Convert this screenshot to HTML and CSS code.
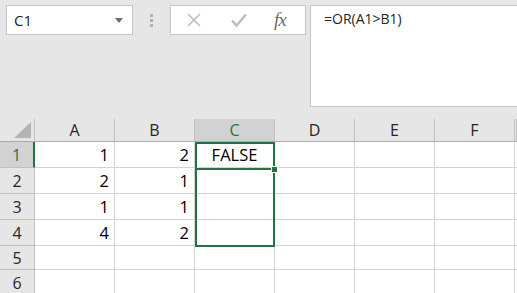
FILE: index.html
```html
<!DOCTYPE html>
<html lang="en">
<head>
    <meta charset="UTF-8">
    <title>OR formula</title>
    <link rel="stylesheet" href="styles.css">
</head>
<body>

<!-- Name box, buttons and formula bar -->
<div class="toolbar">
    <div class="name-box">
        <span>C1</span>
        <svg class="caret" width="8" height="5" viewBox="0 0 8 5"><path d="M0 0h8L4 5z" fill="#6d6d6d"/></svg>
    </div>
    <div class="grip">
        <i></i><i></i><i></i>
    </div>
    <div class="fx-buttons">
        <svg width="16" height="16" viewBox="0 0 16 16"><path d="M2 2l12 12M14 2L2 14" stroke="#bdbdbd" stroke-width="1.6" fill="none"/></svg>
        <svg width="18" height="16" viewBox="0 0 18 16"><path d="M2 8.5l4.5 5L16 2.5" stroke="#bdbdbd" stroke-width="2.6" fill="none"/></svg>
        <span class="fx">fx</span>
    </div>
    <div class="formula">=OR(A1&gt;B1)</div>
</div>

<!-- Sheet -->
<div class="sheet">
    <div class="corner"><svg width="17" height="16" viewBox="0 0 17 16"><path d="M17 0v16H0z" fill="#b4b4b4"/></svg></div>
    <div class="col-head">A</div>
    <div class="col-head">B</div>
    <div class="col-head active">C</div>
    <div class="col-head">D</div>
    <div class="col-head">E</div>
    <div class="col-head">F</div>
    <div class="col-head"></div>

    <div class="row-head active">1</div>
    <div class="cell num">1</div><div class="cell num">2</div><div class="cell center">FALSE</div>
    <div class="cell"></div><div class="cell"></div><div class="cell"></div><div class="cell"></div>

    <div class="row-head">2</div>
    <div class="cell num">2</div><div class="cell num">1</div><div class="cell"></div>
    <div class="cell"></div><div class="cell"></div><div class="cell"></div><div class="cell"></div>

    <div class="row-head">3</div>
    <div class="cell num">1</div><div class="cell num">1</div><div class="cell"></div>
    <div class="cell"></div><div class="cell"></div><div class="cell"></div><div class="cell"></div>

    <div class="row-head">4</div>
    <div class="cell num">4</div><div class="cell num">2</div><div class="cell"></div>
    <div class="cell"></div><div class="cell"></div><div class="cell"></div><div class="cell"></div>

    <div class="row-head">5</div>
    <div class="cell"></div><div class="cell"></div><div class="cell"></div>
    <div class="cell"></div><div class="cell"></div><div class="cell"></div><div class="cell"></div>

    <div class="row-head">6</div>
    <div class="cell"></div><div class="cell"></div><div class="cell"></div>
    <div class="cell"></div><div class="cell"></div><div class="cell"></div><div class="cell"></div>

    <!-- selection overlay -->
    <div class="range"></div>
    <div class="active-line"></div>
    <div class="handle"></div>
</div>

</body>
</html>
```

FILE: styles.css
```css
body {
    margin: 0;
    background-color: #e6e6e6;
    font-family: "Open Sans", "Noto Sans", sans-serif;
    color: #000;
    overflow: hidden;
    width: 517px;
    height: 293px;
}
.toolbar {
    display: flex;
    align-items: flex-start;
    padding: 5px 0 0 6px;
    height: 102px;
}
.name-box {
    box-sizing: border-box;
    width: 127px;
    height: 30px;
    background-color: #fff;
    border: 1px solid #c6c6c6;
    display: flex;
    align-items: center;
    justify-content: space-between;
    padding: 0 9px 0 7px;
    font-size: 15px;
    color: #262626;
}
.caret {
    margin-top: 1px;
}
.grip {
    width: 37px;
    height: 30px;
    display: flex;
    flex-direction: column;
    align-items: center;
    justify-content: center;
    gap: 2px;
}
.grip i {
    width: 3px;
    height: 3px;
    background-color: #b1b1b1;
}
.fx-buttons {
    box-sizing: border-box;
    width: 136px;
    height: 30px;
    background-color: #fff;
    border: 1px solid #c6c6c6;
    display: flex;
    align-items: center;
    padding: 0 0 0 15px;
}
.fx-buttons svg + svg {
    margin-left: 28px;
}
.fx {
    margin-left: 26px;
    font-family: "Liberation Serif", serif;
    font-style: italic;
    font-size: 19px;
    color: #6d6d6d;
    letter-spacing: -1px;
}
.formula {
    box-sizing: border-box;
    flex: 1;
    height: 102px;
    margin-left: 4px;
    background-color: #fff;
    border: 1px solid #c6c6c6;
    border-right: none;
    padding: 3px 13px;
    font-size: 14px;
    color: #262626;
}
.sheet {
    position: relative;
    margin-top: 12px;
    width: 517px;
    overflow: hidden;
    display: grid;
    grid-template-columns: 35px repeat(6, 80px) 2px;
    grid-template-rows: 23px repeat(4, 26px) 24px 26px;
    background-color: #fff;
}
.corner, .col-head, .row-head, .cell {
    box-sizing: border-box;
    display: flex;
    align-items: center;
}
.corner {
    background-color: #e6e6e6;
    border-right: 1px solid #c0c0c0;
    border-bottom: 1px solid #ababab;
    justify-content: flex-end;
    align-items: flex-end;
    padding: 0 3px 3px 0;
}
.col-head {
    justify-content: center;
    background-color: #e6e6e6;
    border-right: 1px solid #c0c0c0;
    border-bottom: 1px solid #ababab;
    font-size: 16px;
    color: #262626;
}
.col-head.active {
    background-color: #d2d2d2;
    color: #217346;
}
.row-head {
    justify-content: center;
    background-color: #e6e6e6;
    border-right: 1px solid #c0c0c0;
    border-bottom: 1px solid #c0c0c0;
    font-size: 16px;
    color: #262626;
}
.row-head.active {
    background-color: #d2d2d2;
    color: #217346;
    border-right: 2px solid #217346;
}
.cell {
    border-right: 1px solid #d4d4d4;
    border-bottom: 1px solid #d4d4d4;
    font-size: 16.5px;
    padding: 0 5px;
    overflow: hidden;
}
.num {
    justify-content: flex-end;
}
.center {
    justify-content: center;
}
.range {
    position: absolute;
    left: 195px;
    top: 23px;
    width: 80px;
    height: 105px;
    box-sizing: border-box;
    border: 2px solid #217346;
}
.active-line {
    position: absolute;
    left: 195px;
    top: 49px;
    width: 78px;
    height: 2px;
    background-color: #217346;
}
.handle {
    position: absolute;
    left: 271px;
    top: 47px;
    width: 5px;
    height: 5px;
    background-color: #217346;
    border: 1px solid #fff;
}
```
